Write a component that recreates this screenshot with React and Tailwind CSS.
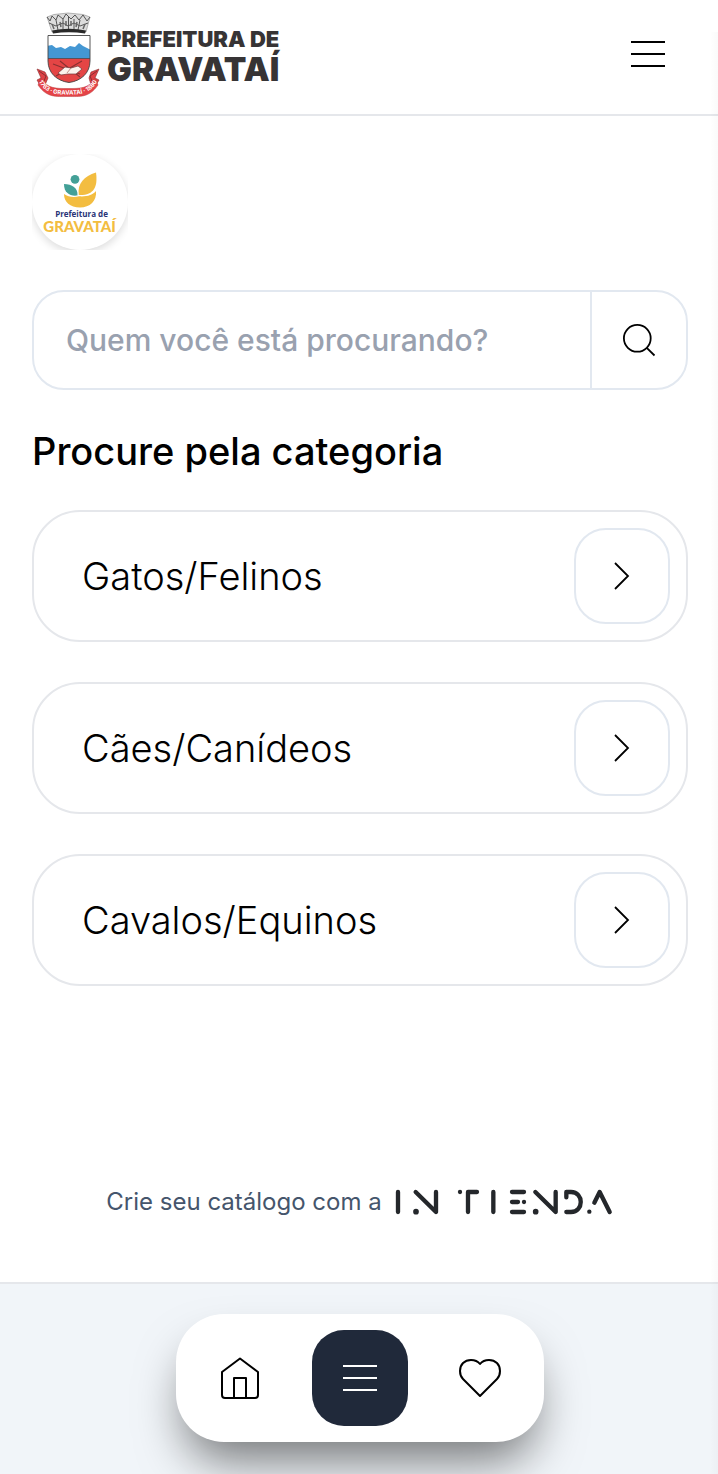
import React from "react";

const categories = ["Gatos/Felinos", "Cães/Canídeos", "Cavalos/Equinos"];

function Crest() {
  return (
    <svg viewBox="2 4 73 93" className="h-[93px] w-[73px] shrink-0" aria-hidden="true">
      <defs>
        <path id="ribbon-curve" d="M9 75C17 89 30 87.500 38 87.500S59 89 67 75" />
        <clipPath id="shield-clip">
          <path d="M18 28.500H60V54C60 66 51 74 39 75.500C27 74 18 66 18 54Z" />
        </clipPath>
      </defs>
      <path d="M17 10 24 7.500 38 6 53 7.500 60 10 56 25Q39 21.500 22 25Z" fill="#dcdcdc" stroke="#888" strokeWidth=".6" />
      <path d="M17 10 20 14 22 9 26 13 28 8 33 12 36 7 41 12 45 8 49 13 53 8 57 14 60 10M19 16 26 19 33 16 38 19 44 16 50 19 58 16M26 13 28 23M33 12V22M38.500 9V22M44 12V22M50 13 48 23" fill="none" stroke="#555" strokeWidth="1" />
      <path d="M22 17 24 22M30 15 31 20M36 14V19M41 14V19M47 15 46 20M55 17 53 22" stroke="#666" strokeWidth="1.500" />
      <path d="M22 23.500Q39 20 56 23.500L55 26.500Q39 24 23 26.500Z" fill="#292929" />
      <g clipPath="url(#shield-clip)">
        <path d="M17 28H61V53H17Z" fill="#fff" />
        <path d="M17 39 22 38 26 41 31 40 35 42 40 39 45 40 49 36 53 39 57 41 61 43V53H17Z" fill="#4497d3" />
        <path d="M17 51.500H61V77H17Z" fill="#e44545" />
        <path d="M17 51.500H61" stroke="#444" strokeWidth=".7" />
        <path d="M26 69 52 54M23 57 50 67M30 54 50 70" stroke="#8a3031" strokeWidth="1.100" />
        <path d="M28 66 35 60 41 61 48 59 52 62 46 67 38 67 31 68Z" fill="#fbf2ec" stroke="#713336" strokeWidth=".7" />
        <path d="M41 61 37 66" stroke="#a9655f" strokeWidth=".7" />
      </g>
      <path d="M18 28.500H60V54C60 66 51 74 39 75.500C27 74 18 66 18 54Z" fill="none" stroke="#444" strokeWidth=".9" />
      <path d="M7 62 15 65 18 71 15 78 11 80 7 73 11 71ZM69 62 61 65 59 71 61 78 65 80 69 73 65 71Z" fill="#df4145" stroke="#8a3033" strokeWidth=".6" />
      <path d="M11 71C17 82 27 81.500 38 81.500S59 82 65 71L68 78C59 91 50 89.500 38 89.500S17 91 8 78Z" fill="#e54347" stroke="#b93a3d" strokeWidth=".5" />
      <path d="M9 64 16 69 14 74M67 64 60 69 62 74" fill="none" stroke="#742a2d" strokeWidth=".8" />
      <text fill="#fff" textAnchor="middle" className="font-['Inter',sans-serif] text-[6px] font-bold">
        <textPath href="#ribbon-curve" startOffset="50%">1763 · GRAVATAÍ · 1880</textPath>
      </text>
    </svg>
  );
}

function MenuIcon() {
  return (
    <svg viewBox="0 0 44 44" className="size-11" fill="none" stroke="currentColor" strokeWidth="2" aria-hidden="true">
      <path d="M5 10H39M5 22H39M5 34H39" />
    </svg>
  );
}

function ProfileLogo() {
  return (
    <div className="size-24 overflow-hidden">
      <div className="size-full rounded-full bg-white shadow-[0_3px_8px_rgba(0,0,0,0.14)]">
        <svg viewBox="0 0 96 96" className="size-full" role="img" aria-label="Prefeitura de Gravataí">
          <circle cx="43" cy="25.300" r="4.400" fill="#43a097" />
          <path d="M32 30C40 30 46 34 45.500 41.500C38 42.500 32 39 32 30Z" fill="#43a097" />
          <path d="M64 18.500C66 33 62 41.500 46.800 41C45 30 52 22 64 18.500Z" fill="#f3bd40" />
          <path d="M32 40C36 43 42 43.500 47 42.300C54 43 61 41 64 37C65 47 58 53.500 48 53.500C38 53.500 32 48 32 40Z" fill="#f3bd40" />
          <text x="49.500" y="62.500" textAnchor="middle" fill="#293477" className="font-['Open_Sans',sans-serif] text-[8px] font-bold">Prefeitura de</text>
          <text x="47.500" y="77.500" textAnchor="middle" fill="#f3bd40" className="font-['Lato',sans-serif] text-[15px] font-black">GRAVATAÍ</text>
        </svg>
      </div>
    </div>
  );
}

function IntiendaLogo() {
  return (
    <svg viewBox="42 54 660 84" className="h-7 w-[220px]" role="img" aria-label="INTIENDA">
      <g fill="none" stroke="#24272b" strokeWidth="13" strokeLinecap="round" strokeLinejoin="round">
        <path d="M54 66V126M107 66 168 126V66M291 66H264V126M340 66V126" />
        <path d="M396 66H432M396 96H414M396 126H432M466 66 527 126V66" />
        <path d="M559 82V66H573C612 66 612 126 573 126H559M643 98 659 66 689 126" />
      </g>
      <g fill="#24272b">
        <circle cx="108" cy="125" r="8.500" />
        <circle cx="240" cy="66" r="6.500" />
        <circle cx="432" cy="96" r="6.500" />
        <circle cx="467" cy="125" r="8.500" />
        <circle cx="628" cy="125" r="6.500" />
      </g>
    </svg>
  );
}

export default function App() {
  return (
    <div className="relative flex min-h-screen flex-col overflow-hidden bg-white font-['Inter',sans-serif] text-black">
      <header className="flex h-29 items-center justify-between border-b-2 border-gray-200 pr-12 pl-8">
        <a href="#inicio" className="flex items-center gap-0.5 text-[#373435]">
          <Crest />
          <span className="flex flex-col font-black">
            <span className="text-[22px] leading-6">PREFEITURA DE</span>
            <span className="text-[33px] leading-9">GRAVATAÍ</span>
          </span>
        </a>
        <button type="button" aria-label="Abrir menu" className="mb-1.5">
          <MenuIcon />
        </button>
      </header>

      <main className="flex flex-col pt-[38px] pr-[30px] pl-8">
        <ProfileLogo />
        <form className="mt-10 flex h-[100px] overflow-hidden rounded-[32px] border-2 border-slate-200" onSubmit={(e) => e.preventDefault()}>
          <input type="search" aria-label="Quem você está procurando?" placeholder="Quem você está procurando?" className="min-w-0 flex-1 px-8 text-[30px] outline-none placeholder:font-medium placeholder:text-gray-400" />
          <button type="submit" aria-label="Buscar" className="flex w-24 items-center justify-center border-l-2 border-slate-200">
            <svg viewBox="0 0 48 48" className="size-12" fill="none" stroke="currentColor" strokeWidth="1.800" aria-hidden="true">
              <circle cx="22.300" cy="22.300" r="13.400" />
              <path d="M31.800 31.800 39.500 39.500" />
            </svg>
          </button>
        </form>
        <h1 className="mt-8 text-[38px] leading-[58px] font-medium">Procure pela categoria</h1>
        <ul className="mt-[30px] flex flex-col gap-10">
          {categories.map((name) => (
            <li key={name}>
              <a href="#categoria" className="flex items-center justify-between rounded-[48px] border-2 border-gray-200 py-4 pr-4 pl-12">
                <span className="text-[38px] leading-[56px] font-light">{name}</span>
                <span className="flex size-24 items-center justify-center rounded-[32px] border-2 border-slate-200">
                  <svg viewBox="0 0 48 48" className="size-12" fill="none" stroke="currentColor" strokeWidth="1.800" aria-hidden="true">
                    <path d="M17 11 30 24 17 37" />
                  </svg>
                </span>
              </a>
            </li>
          ))}
        </ul>
      </main>

      <a href="#intienda" className="mt-auto flex items-center justify-center gap-3 pt-12 pb-[62px] pl-0.5 text-slate-600">
        <span className="text-[24px] leading-9">Crie seu catálogo com a</span>
        <IntiendaLogo />
      </a>

      <footer className="flex h-48 justify-center border-t-2 border-gray-200 bg-slate-100 pt-[30px] pl-0.5">
        <nav className="flex h-32 items-center gap-6 rounded-[48px] bg-white px-4 shadow-[0_28px_48px_-10px_rgba(0,0,0,0.52)]">
          <a href="#inicio" aria-label="Início" className="flex size-24 items-center justify-center">
            <svg viewBox="0 0 48 48" className="size-12" fill="none" stroke="currentColor" strokeWidth="2" strokeLinejoin="round" aria-hidden="true">
              <path d="M6 18 24 4.500 42 18V41A3 3 0 0 1 39 44H9A3 3 0 0 1 6 41ZM18 44V24H30V44" />
            </svg>
          </a>
          <button type="button" aria-label="Categorias" className="flex size-24 items-center justify-center rounded-[32px] bg-[#20293a] text-white">
            <MenuIcon />
          </button>
          <a href="#favoritos" aria-label="Favoritos" className="flex size-24 items-center justify-center">
            <svg viewBox="0 0 48 48" className="size-12" fill="none" stroke="currentColor" strokeWidth="2" strokeLinejoin="round" aria-hidden="true">
              <path d="M24 42 7 25C5 23 4 20 4 17C4 10.500 8.500 6 15 6C19 6 22 7.500 24 10C26 7.500 29 6 33 6C39.500 6 44 10.500 44 17C44 20 43 23 41 25Z" />
            </svg>
          </a>
        </nav>
      </footer>
      <div className="pointer-events-none absolute top-8 right-0 bottom-0 w-2 bg-linear-to-l from-black/2 to-transparent" />
    </div>
  );
}
